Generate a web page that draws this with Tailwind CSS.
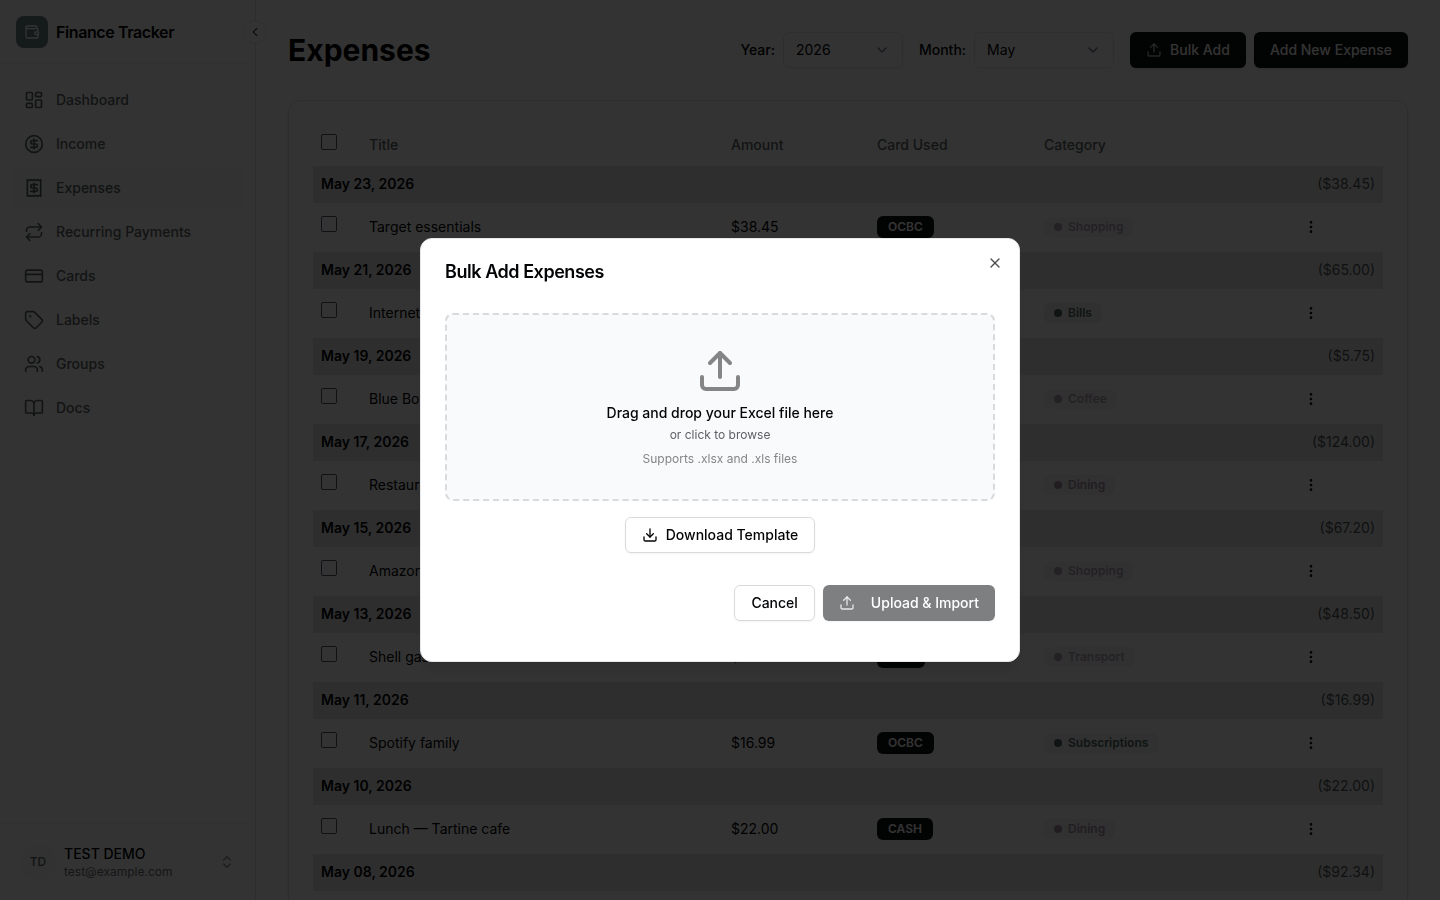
<!DOCTYPE html>
<html lang="en">
<head>
    <meta charset="UTF-8">
    <meta name="viewport" content="width=device-width, initial-scale=1.0">
    <title>Finance Tracker - Expenses</title>
    <script src="https://cdn.jsdelivr.net/npm/@tailwindcss/browser@4"></script>
    <style>
        body {
            font-family: 'Inter', 'Liberation Sans', sans-serif;
        }
    </style>
</head>
<body class="h-screen overflow-hidden bg-white text-sm text-[#030406] antialiased">
    <!-- Icon sprite -->
    <svg class="hidden" aria-hidden="true">
        <symbol id="i-wallet" viewBox="0 0 24 24"><path d="M19 7V4a1 1 0 0 0-1-1H5a2 2 0 0 0 0 4h15a1 1 0 0 1 1 1v4h-3a2 2 0 0 0 0 4h3a1 1 0 0 0 1-1v-2a1 1 0 0 0-1-1"/><path d="M3 5v14a2 2 0 0 0 2 2h15a1 1 0 0 0 1-1v-4"/></symbol>
        <symbol id="i-dashboard" viewBox="0 0 24 24"><rect width="7" height="9" x="3" y="3" rx="1"/><rect width="7" height="5" x="14" y="3" rx="1"/><rect width="7" height="9" x="14" y="12" rx="1"/><rect width="7" height="5" x="3" y="16" rx="1"/></symbol>
        <symbol id="i-dollar" viewBox="0 0 24 24"><circle cx="12" cy="12" r="10"/><path d="M16 8h-6a2 2 0 1 0 0 4h4a2 2 0 1 1 0 4H8"/><path d="M12 18V6"/></symbol>
        <symbol id="i-receipt" viewBox="0 0 24 24"><path d="M4 2v20l2-1 2 1 2-1 2 1 2-1 2 1 2-1 2 1V2l-2 1-2-1-2 1-2-1-2 1-2-1-2 1Z"/><path d="M16 8h-6a2 2 0 1 0 0 4h4a2 2 0 1 1 0 4H8"/><path d="M12 17.5v-11"/></symbol>
        <symbol id="i-repeat" viewBox="0 0 24 24"><path d="m17 2 4 4-4 4"/><path d="M3 11v-1a4 4 0 0 1 4-4h14"/><path d="m7 22-4-4 4-4"/><path d="M21 13v1a4 4 0 0 1-4 4H3"/></symbol>
        <symbol id="i-card" viewBox="0 0 24 24"><rect width="20" height="14" x="2" y="5" rx="2"/><path d="M2 10h20"/></symbol>
        <symbol id="i-tag" viewBox="0 0 24 24"><path d="M12.586 2.586A2 2 0 0 0 11.172 2H4a2 2 0 0 0-2 2v7.172a2 2 0 0 0 .586 1.414l8.704 8.704a2.426 2.426 0 0 0 3.42 0l6.58-6.58a2.426 2.426 0 0 0 0-3.42z"/><circle cx="7.5" cy="7.5" r=".5" fill="currentColor"/></symbol>
        <symbol id="i-users" viewBox="0 0 24 24"><path d="M16 21v-2a4 4 0 0 0-4-4H6a4 4 0 0 0-4 4v2"/><circle cx="9" cy="7" r="4"/><path d="M22 21v-2a4 4 0 0 0-3-3.87"/><path d="M16 3.13a4 4 0 0 1 0 7.75"/></symbol>
        <symbol id="i-book" viewBox="0 0 24 24"><path d="M12 7v14"/><path d="M3 18a1 1 0 0 1-1-1V4a1 1 0 0 1 1-1h5a4 4 0 0 1 4 4 4 4 0 0 1 4-4h5a1 1 0 0 1 1 1v13a1 1 0 0 1-1 1h-6a3 3 0 0 0-3 3 3 3 0 0 0-3-3z"/></symbol>
        <symbol id="i-left" viewBox="0 0 24 24"><path d="m15 18-6-6 6-6"/></symbol>
        <symbol id="i-down" viewBox="0 0 24 24"><path d="m6 9 6 6 6-6"/></symbol>
        <symbol id="i-updown" viewBox="0 0 24 24"><path d="m7 15 5 5 5-5"/><path d="m7 9 5-5 5 5"/></symbol>
        <symbol id="i-upload" viewBox="0 0 24 24"><path d="M21 15v4a2 2 0 0 1-2 2H5a2 2 0 0 1-2-2v-4"/><path d="m17 8-5-5-5 5"/><path d="M12 3v12"/></symbol>
        <symbol id="i-download" viewBox="0 0 24 24"><path d="M21 15v4a2 2 0 0 1-2 2H5a2 2 0 0 1-2-2v-4"/><path d="m7 10 5 5 5-5"/><path d="M12 15V3"/></symbol>
        <symbol id="i-dots" viewBox="0 0 24 24"><circle cx="12" cy="12" r="1"/><circle cx="12" cy="5" r="1"/><circle cx="12" cy="19" r="1"/></symbol>
        <symbol id="i-x" viewBox="0 0 24 24"><path d="M18 6 6 18"/><path d="m6 6 12 12"/></symbol>
    </svg>

    <div class="flex h-full">
        <!-- Sidebar -->
        <aside class="relative flex w-64 shrink-0 flex-col border-r border-gray-200">
            <div class="flex h-16 items-center gap-2 border-b border-gray-100 px-4">
                <div class="flex size-8 items-center justify-center rounded-lg bg-[#6c8686] text-white">
                    <svg class="size-4 fill-none stroke-current stroke-2" stroke-linecap="round" stroke-linejoin="round"><use href="#i-wallet"/></svg>
                </div>
                <span class="text-base font-semibold tracking-tight">Finance Tracker</span>
            </div>
            <button type="button" aria-label="Collapse sidebar" class="absolute -right-3 top-5 flex size-6 items-center justify-center rounded-full border border-gray-200 bg-white text-gray-700">
                <svg class="size-3.5 fill-none stroke-current stroke-2" stroke-linecap="round" stroke-linejoin="round"><use href="#i-left"/></svg>
            </button>

            <nav id="nav" class="flex flex-1 flex-col gap-1 px-3 py-4"></nav>

            <div class="border-t border-gray-100 p-3">
                <button type="button" class="flex w-full items-center gap-2 rounded-md px-2 py-2 text-left">
                    <span class="flex size-9 items-center justify-center rounded-full bg-[#f7f7f7] text-xs font-medium text-[#5c6667]">TD</span>
                    <span class="flex-1">
                        <span class="block text-sm font-medium">TEST DEMO</span>
                        <span class="block text-xs text-[#6a6e72]">test@example.com</span>
                    </span>
                    <svg class="size-4 fill-none stroke-[#958d99] stroke-2" stroke-linecap="round" stroke-linejoin="round"><use href="#i-updown"/></svg>
                </button>
            </div>
        </aside>

        <!-- Page -->
        <main class="min-w-0 flex-1 p-8">
            <header class="flex h-9 items-center justify-between">
                <h1 class="text-3xl font-bold">Expenses</h1>
                <div class="flex items-center gap-4">
                    <div class="flex items-center gap-2">
                        <label for="year" class="font-medium">Year:</label>
                        <div class="relative w-30">
                            <select id="year" class="h-9 w-full appearance-none rounded-md border border-gray-200 bg-transparent px-3 shadow-xs">
                                <option>2026</option>
                            </select>
                            <svg class="pointer-events-none absolute top-2.5 right-[13px] size-4 fill-none stroke-gray-500 stroke-2" stroke-linecap="round" stroke-linejoin="round"><use href="#i-down"/></svg>
                        </div>
                    </div>
                    <div class="flex items-center gap-2">
                        <label for="month" class="font-medium">Month:</label>
                        <div class="relative w-35">
                            <select id="month" class="h-9 w-full appearance-none rounded-md border border-gray-200 bg-transparent px-3 shadow-xs">
                                <option>May</option>
                            </select>
                            <svg class="pointer-events-none absolute top-2.5 right-[13px] size-4 fill-none stroke-gray-500 stroke-2" stroke-linecap="round" stroke-linejoin="round"><use href="#i-down"/></svg>
                        </div>
                    </div>
                    <div class="flex gap-2">
                        <button type="button" class="flex h-9 items-center gap-2 rounded-md bg-[#0d1110] px-4 font-medium text-white shadow">
                            <svg class="size-4 fill-none stroke-white/70 stroke-2" stroke-linecap="round" stroke-linejoin="round"><use href="#i-upload"/></svg>
                            Bulk Add
                        </button>
                        <button type="button" class="h-9 rounded-md bg-[#0d1110] px-4 font-medium text-white shadow">Add New Expense</button>
                    </div>
                </div>
            </header>

            <section class="mt-8 rounded-xl border border-gray-200 p-6 shadow-sm">
                <table class="w-full table-fixed">
                    <colgroup>
                        <col class="w-12">
                        <col>
                        <col class="w-[146px]">
                        <col class="w-[167px]">
                        <col class="w-[251px]">
                        <col class="w-24">
                    </colgroup>
                    <thead>
                        <tr class="h-[41px] text-left text-[#5c6667]">
                            <th class="px-2 pb-0.5"><input type="checkbox" aria-label="Select all" class="mb-1.5 block size-4 appearance-none rounded-xs border border-gray-600"></th>
                            <th class="px-2 pb-0.5 font-medium">Title</th>
                            <th class="px-2 pb-0.5 font-medium">Amount</th>
                            <th class="px-2 pb-0.5 font-medium">Card Used</th>
                            <th class="px-2 pb-0.5 font-medium">Category</th>
                            <th class="px-2 pb-0.5"></th>
                        </tr>
                    </thead>
                    <tbody id="rows"></tbody>
                </table>
            </section>
        </main>
    </div>

    <!-- Bulk add dialog -->
    <div class="fixed inset-0 flex items-center justify-center bg-black/80">
        <div role="dialog" aria-modal="true" aria-labelledby="dialog-title" class="relative flex w-full max-w-[600px] flex-col gap-4 rounded-xl border border-gray-200 bg-white p-6 shadow-lg">
            <h2 id="dialog-title" class="text-lg leading-none font-semibold tracking-tight">Bulk Add Expenses</h2>
            <button type="button" aria-label="Close" class="absolute top-4 right-4 text-[#4a4b4d]">
                <svg class="size-4 fill-none stroke-current stroke-2" stroke-linecap="round" stroke-linejoin="round"><use href="#i-x"/></svg>
            </button>

            <div class="flex flex-col gap-4 py-4">
                <label for="file" class="flex cursor-pointer flex-col items-center rounded-lg border-2 border-dashed border-[#d9dadc] bg-[#f9fafc] p-8">
                    <svg class="size-12 fill-none stroke-[#858585] stroke-2" stroke-linecap="round" stroke-linejoin="round"><use href="#i-upload"/></svg>
                    <span class="mt-2 text-sm font-medium">Drag and drop your Excel file here</span>
                    <span class="mt-1 text-xs text-[#5f6063]">or click to browse</span>
                    <span class="mt-2 text-xs text-[#858585]">Supports .xlsx and .xls files</span>
                    <input id="file" type="file" accept=".xlsx,.xls" class="sr-only">
                </label>
                <div class="flex justify-center">
                    <button type="button" class="flex h-9 items-center gap-2 rounded-md border border-[#d9dadc] px-4 font-medium shadow-xs">
                        <svg class="size-4 fill-none stroke-current stroke-2" stroke-linecap="round" stroke-linejoin="round"><use href="#i-download"/></svg>
                        Download Template
                    </button>
                </div>
            </div>

            <div class="flex justify-end gap-2 pb-4">
                <button type="button" class="h-9 rounded-md border border-[#d9dadc] px-4 font-medium shadow-xs">Cancel</button>
                <button type="button" disabled class="flex h-9 items-center gap-4 rounded-md bg-[#7e7f80] px-4 font-medium text-white shadow-xs">
                    <svg class="size-4 fill-none stroke-white/80 stroke-2" stroke-linecap="round" stroke-linejoin="round"><use href="#i-upload"/></svg>
                    Upload &amp; Import
                </button>
            </div>
        </div>
    </div>

    <script>
        const navItems = [
            ['Dashboard', 'i-dashboard'],
            ['Income', 'i-dollar'],
            ['Expenses', 'i-receipt'],
            ['Recurring Payments', 'i-repeat'],
            ['Cards', 'i-card'],
            ['Labels', 'i-tag'],
            ['Groups', 'i-users'],
            ['Docs', 'i-book'],
        ];

        document.getElementById('nav').innerHTML = navItems.map(([label, icon]) => `
            <a href="#" class="flex h-10 items-center gap-3 rounded-md px-3 font-medium ${label === 'Expenses' ? 'bg-[#fafafa] text-[#536060]' : 'text-[#5c6667]'}">
                <svg class="size-5 fill-none stroke-current stroke-2" stroke-linecap="round" stroke-linejoin="round"><use href="#${icon}"/></svg>
                ${label}
            </a>`).join('');

        const categoryStyle = {
            Shopping: 'bg-[#f6f6f6] text-[#b3a3b6]',
            Bills: 'bg-[#efefef] text-[#4f6664]',
            Coffee: 'bg-[#f6f6f6] text-[#b3a3b6]',
            Dining: 'bg-[#f4f4f4] text-[#a392a6]',
            Transport: 'bg-[#f6f6f6] text-[#b3a3b6]',
            Subscriptions: 'bg-[#f3f3f3] text-[#4f6664]',
        };

        const expenses = [
            ['May 23, 2026', 'Target essentials', '38.45', 'OCBC', 'Shopping'],
            ['May 21, 2026', 'Internet bill', '65.00', 'OCBC', 'Bills'],
            ['May 19, 2026', 'Blue Bottle', '5.75', 'CASH', 'Coffee'],
            ['May 17, 2026', 'Restaurant', '124.00', 'OCBC', 'Dining'],
            ['May 15, 2026', 'Amazon', '67.20', 'OCBC', 'Shopping'],
            ['May 13, 2026', 'Shell gas', '48.50', 'UOB', 'Transport'],
            ['May 11, 2026', 'Spotify family', '16.99', 'OCBC', 'Subscriptions'],
            ['May 10, 2026', 'Lunch — Tartine cafe', '22.00', 'CASH', 'Dining'],
            ['May 08, 2026', '', '92.34', '', ''],
        ];

        document.getElementById('rows').innerHTML = expenses.map(([date, title, amount, card, category]) => `
            <tr class="h-[37px] bg-[#e7e7e7]">
                <td colspan="3" class="px-2 pb-0.5 font-semibold">${date}</td>
                <td colspan="3" class="px-2 pb-0.5 text-right text-[#4c5657]">($${amount})</td>
            </tr>` + (title ? `
            <tr class="h-[49px]">
                <td class="px-2 pb-0.5"><input type="checkbox" aria-label="Select ${title}" class="mb-1.5 block size-4 appearance-none rounded-xs border border-gray-600"></td>
                <td class="px-2 pb-0.5">${title}</td>
                <td class="px-2 pb-0.5">$${amount}</td>
                <td class="px-2 pb-0.5"><span class="inline-flex rounded-md border border-transparent bg-[#0d1110] px-2.5 py-0.5 align-middle text-xs font-semibold text-white">${card}</span></td>
                <td class="px-2 pb-0.5"><span class="inline-flex items-center gap-1.5 rounded-md px-2.5 py-0.5 align-middle text-xs font-semibold ${categoryStyle[category]}"><span class="size-2 rounded-full bg-current"></span>${category}</span></td>
                <td class="px-2 pb-0.5">
                    <button type="button" aria-label="Actions" class="flex size-8 items-center justify-center">
                        <svg class="size-4 fill-none stroke-current stroke-2" stroke-linecap="round" stroke-linejoin="round"><use href="#i-dots"/></svg>
                    </button>
                </td>
            </tr>` : '')).join('');
    </script>
</body>
</html>
